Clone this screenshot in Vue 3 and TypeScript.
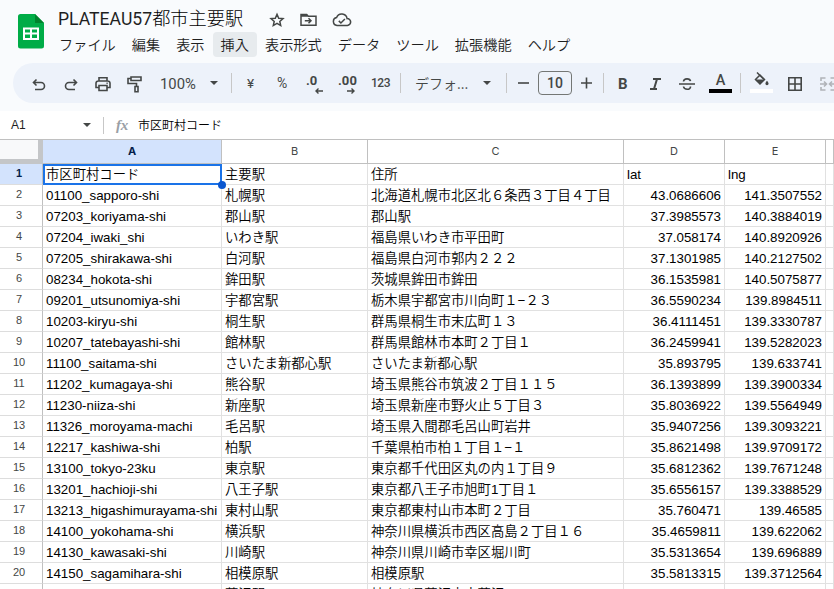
<script setup lang="ts">
interface Row {
  code: string
  station: string
  address: string
  lat: string
  lng: string
}

const menus = [
  { label: 'ファイル' },
  { label: '編集' },
  { label: '表示' },
  { label: '挿入', active: true },
  { label: '表示形式' },
  { label: 'データ' },
  { label: 'ツール' },
  { label: '拡張機能' },
  { label: 'ヘルプ' },
]

const columns = ['A', 'B', 'C', 'D', 'E', '']

const source: string[][] = [
  ['市区町村コード', '主要駅', '住所', 'lat', 'lng'],
  ['01100_sapporo-shi', '札幌駅', '北海道札幌市北区北６条西３丁目４丁目', '43.0686606', '141.3507552'],
  ['07203_koriyama-shi', '郡山駅', '郡山駅', '37.3985573', '140.3884019'],
  ['07204_iwaki_shi', 'いわき駅', '福島県いわき市平田町', '37.058174', '140.8920926'],
  ['07205_shirakawa-shi', '白河駅', '福島県白河市郭内２２２', '37.1301985', '140.2127502'],
  ['08234_hokota-shi', '鉾田駅', '茨城県鉾田市鉾田', '36.1535981', '140.5075877'],
  ['09201_utsunomiya-shi', '宇都宮駅', '栃木県宇都宮市川向町１−２３', '36.5590234', '139.8984511'],
  ['10203-kiryu-shi', '桐生駅', '群馬県桐生市末広町１３', '36.4111451', '139.3330787'],
  ['10207_tatebayashi-shi', '館林駅', '群馬県館林市本町２丁目１', '36.2459941', '139.5282023'],
  ['11100_saitama-shi', 'さいたま新都心駅', 'さいたま新都心駅', '35.893795', '139.633741'],
  ['11202_kumagaya-shi', '熊谷駅', '埼玉県熊谷市筑波２丁目１１５', '36.1393899', '139.3900334'],
  ['11230-niiza-shi', '新座駅', '埼玉県新座市野火止５丁目３', '35.8036922', '139.5564949'],
  ['11326_moroyama-machi', '毛呂駅', '埼玉県入間郡毛呂山町岩井', '35.9407256', '139.3093221'],
  ['12217_kashiwa-shi', '柏駅', '千葉県柏市柏１丁目１−１', '35.8621498', '139.9709172'],
  ['13100_tokyo-23ku', '東京駅', '東京都千代田区丸の内１丁目９', '35.6812362', '139.7671248'],
  ['13201_hachioji-shi', '八王子駅', '東京都八王子市旭町1丁目１', '35.6556157', '139.3388529'],
  ['13213_higashimurayama-shi', '東村山駅', '東京都東村山市本町２丁目', '35.760471', '139.46585'],
  ['14100_yokohama-shi', '横浜駅', '神奈川県横浜市西区高島２丁目１６', '35.4659811', '139.622062'],
  ['14130_kawasaki-shi', '川崎駅', '神奈川県川崎市幸区堀川町', '35.5313654', '139.696889'],
  ['14150_sagamihara-shi', '相模原駅', '相模原駅', '35.5813315', '139.3712564'],
  ['', '藤沢駅', '神奈川県藤沢市南藤沢', '', ''],
]
const rows: Row[] = source.map(([code, station, address, lat, lng]) => ({ code, station, address, lat, lng }))
</script>

<template>
  <div class="app">
    <header class="top">
      <svg class="logo" width="26" height="35" viewBox="0 0 26 35">
        <path d="M2.500 0H17l9 9v23a2.500 2.500 0 0 1-2.500 2.500h-21A2.500 2.500 0 0 1 0 32V2.500A2.500 2.500 0 0 1 2.500 0z" fill="#00ac47" />
        <path d="M17 0l9 9h-9z" fill="#00832d" />
        <path d="M5 13.500h16v12.500H5zM7 15.500v3h5v-3zm7 0v3h5v-3zm-7 5v3.500h5v-3.500zm7 0v3.500h5v-3.500z" fill="#fff" fill-rule="evenodd" />
      </svg>
      <div class="heading">
        <div class="title-line">
          <span class="title">PLATEAU57<span class="ja">都市主要駅</span></span>
          <svg class="t-icon" width="16" height="16" viewBox="0 0 16 16"><path d="M8 2.300l1.700 3.900 4.300.4-3.200 2.800.9 4.200L8 11.400l-3.700 2.200.9-4.200L2 6.600l4.300-.4z" /></svg>
          <svg class="t-icon" width="17" height="14" viewBox="0 0 17 14"><path d="M1 2.500V12.200h15V3.200H8.300L6.700 1.500H1zM1 3h7M4.800 7.700h6M8.500 5.200L11 7.700 8.500 10.200" /></svg>
          <svg class="t-icon" width="20" height="14" viewBox="0 0 20 14"><path d="M5 12.400a4 4 0 0 1-.4-7.900 5.500 5.500 0 0 1 10.500 1.100 3.400 3.400 0 0 1 .3 6.800zM6.800 7.900l2.100 2.100 4-4" /></svg>
        </div>
        <nav class="menus">
          <span v-for="m in menus" :key="m.label" class="menu" :class="{ active: m.active }">{{ m.label }}</span>
        </nav>
      </div>
    </header>

    <div class="toolbar">
      <svg class="undo" width="14" height="14" viewBox="0 0 14 14"><path d="M4.500 1.500L1.500 4.500l3 3M1.800 4.500H9a3.500 3.500 0 0 1 0 7H3" /></svg>
      <svg class="redo" width="14" height="14" viewBox="0 0 14 14"><path d="M9.500 1.500l3 3-3 3M12.200 4.500H5a3.500 3.500 0 0 0 0 7h6" /></svg>
      <svg class="print" width="16" height="16" viewBox="0 0 16 16"><path d="M4 4.500V1.800h8v2.700M4 11.500H1V7.200A2.200 2.200 0 0 1 3.200 5h9.600A2.200 2.200 0 0 1 15 7.200v4.300h-3M4 9.500h8v5H4zM11.500 7.300h1.200" /></svg>
      <svg class="paint" width="15" height="17" viewBox="0 0 15 17"><path d="M4 1h10v3.500H4zM4 2.500H1V7.500h8.500v3M8 10.500h3v5.300H8z" /></svg>
      <span class="zoom">100%</span>
      <i class="caret zoom-caret" />
      <i class="sep s1" />
      <span class="yen">¥</span>
      <span class="percent">%</span>
      <span class="decimal">.0<svg width="8" height="6" viewBox="0 0 8 6"><path d="M8 3H1M3.500.5L1 3l2.500 2.500" /></svg></span>
      <span class="decimal more">.00<svg width="8" height="6" viewBox="0 0 8 6"><path d="M0 3h7M4.500.5L7 3 4.500 5.500" /></svg></span>
      <span class="num">123</span>
      <i class="sep s2" />
      <span class="font">デフォ...</span>
      <i class="caret font-caret" />
      <i class="sep s3" />
      <svg class="minus" width="11" height="12" viewBox="0 0 11 12"><path d="M0 6h11" /></svg>
      <span class="size">10</span>
      <svg class="plus" width="11" height="12" viewBox="0 0 11 12"><path d="M0 6h11M5.500.500v11" /></svg>
      <i class="sep s4" />
      <span class="bold">B</span>
      <svg class="italic" width="11" height="12" viewBox="0 0 11 12"><path d="M3 1h8M0 11h7M7 1L4 11" /></svg>
      <svg class="strike" width="16" height="14" viewBox="0 0 16 14"><path d="M0 7h16M4.500 4.500C4.800 1 11 1 11.500 4.200M4.500 9.500c.5 3.700 7.300 3.700 7 0" /></svg>
      <span class="color">A<i /></span>
      <i class="sep s5" />
      <span class="fill">
        <svg width="15" height="15" viewBox="0 0 15 15"><path class="line" d="M3 .5l7 7M6 3L1.500 7.500 6 12l4.500-4.500z" /><path class="solid" d="M1.500 7.500h9L6 12.200zM13 8.700s1.600 1.800 1.600 2.900a1.600 1.600 0 0 1-3.200 0C11.400 10.500 13 8.700 13 8.700z" /></svg>
        <i />
      </span>
      <svg class="borders" width="14" height="14" viewBox="0 0 14 14"><path d="M.8.800h12.400v12.400H.8zM7 1v12M1 7h12" /></svg>
      <svg class="merge" width="16" height="14" viewBox="0 0 16 14"><path d="M5.500 1H1v3M1 10v3h4.500M10.500 1H15v3M15 10v3h-4.500M0 7h6M4 4.500L6.500 7 4 9.500M16 7h-6M12 4.500L9.500 7l2.500 2.500" /></svg>
    </div>

    <div class="formula">
      <span class="name">A1</span>
      <i class="caret" />
      <i class="fsep" />
      <span class="fx"><em>f</em>x</span>
      <span class="value">市区町村コード</span>
    </div>

    <div class="sheet">
      <div class="corner" />
      <div v-for="(c, i) in columns" :key="'h' + i" class="col-head" :class="{ selected: i === 0 }">{{ c }}</div>
      <template v-for="(r, i) in rows" :key="i">
        <div class="row-head" :class="{ selected: i === 0 }">{{ r.code ? i + 1 : '' }}</div>
        <div class="cell" :class="{ current: i === 0 }">{{ r.code }}<i v-if="i === 0" class="handle" /></div>
        <div class="cell">{{ r.station }}</div>
        <div class="cell">{{ r.address }}</div>
        <div class="cell" :class="{ number: i > 0 }">{{ r.lat }}</div>
        <div class="cell" :class="{ number: i > 0 }">{{ r.lng }}</div>
        <div class="cell" />
      </template>
    </div>
  </div>
</template>

<style>
body { margin: 0; overflow: hidden; }
</style>

<style scoped>
* { box-sizing: border-box; }
.app { width: 834px; height: 589px; overflow: hidden; background: #f9fbfd; color: #1f1f1f; font-family: "Liberation Sans", "Noto Sans CJK JP", sans-serif; white-space: nowrap; }
svg { display: block; flex: none; fill: none; stroke: #444746; stroke-width: 1.6; }
i { display: block; flex: none; }
.top { display: flex; height: 63px; padding-left: 18px; }
.logo { margin-top: 14px; stroke: none; }
.heading { margin-left: 7px; }
.title-line { display: flex; align-items: center; height: 32px; padding: 8px 0 0 7px; }
.title { width: 184px; margin: -5px 27px 0 0; font: 400 17.600px/26px Roboto, "Noto Sans CJK JP", sans-serif; }
.ja { font: 300 18.200px/26px "Noto Sans CJK JP", sans-serif; color: #000; }
.t-icon { margin-right: 15px; stroke-width: 1.5; }
.menus { display: flex; }
.menu { height: 25px; padding: 0 8px; font: 350 14.2px/25px "Noto Sans CJK JP", sans-serif; border-radius: 4px; }
.active { background: #e7ebee; }
.toolbar { display: flex; align-items: center; width: 834px; height: 40px; margin-left: 13px; padding-left: 19px; background: #edf2fa; border-radius: 20px 0 0 20px; color: #444746; }
.caret { border: 4px solid transparent; border-top-color: #444746; border-bottom: 0; }
.sep { width: 1px; height: 20px; background: #c7c7c7; }
.undo { margin-top: 4px; }
.redo { margin: 4px 0 0 18px; }
.print { margin: 1px 0 0 17px; }
.paint { margin: 2px 0 0 16px; }
.zoom { width: 39px; margin-left: 18px; padding-top: 1px; font: 14.800px Roboto; }
.zoom-caret { margin-left: 11px; }
.s1 { margin-left: 13px; }
.yen { width: 9px; margin-left: 15px; font: 13.500px Roboto; }
.percent { width: 12px; margin-left: 21px; font: 14px Roboto; }
.decimal { position: relative; width: 18px; height: 22px; margin-left: 17px; font: 700 13px/18px Roboto; letter-spacing: .1px; }
.decimal svg { position: absolute; left: 9px; top: 16px; stroke-width: 1.4; }
.more { margin-left: 14px; }
.num { width: 19px; margin-left: 15px; font: 500 12px Roboto; letter-spacing: -.5px; }
.s2 { margin-left: 10px; }
.font { width: 54px; margin-left: 14px; font: 350 14px/20px "Noto Sans CJK JP"; }
.font-caret { margin-left: 14px; }
.s3 { margin-left: 15px; }
.minus { margin-left: 11px; }
.size { width: 34px; height: 24px; margin-left: 9px; border: 1px solid #747775; border-radius: 4px; text-align: center; font: 500 14px/23px Roboto; }
.plus { margin-left: 9px; }
.s4 { margin-left: 11px; }
.bold { width: 10px; margin-left: 14px; padding-top: 2px; font: 700 15px Roboto; }
.italic { margin: 2px 0 0 22px; stroke-width: 2; }
.strike { margin: 2px 0 0 18px; }
.color { width: 23px; height: 20px; margin-left: 14px; text-align: center; font: 500 14.500px/16px Roboto; }
.color i { height: 4px; background: #000; }
.s5 { margin-left: 8px; }
.fill { width: 23px; height: 20px; margin-left: 9px; }
.fill svg { margin: -1px 0 0 4px; stroke-width: 1.5; }
.fill i { height: 4px; margin-top: 2px; background: #fff; }
.fill .solid { fill: #444746; stroke: none; }
.borders { margin: 2px 0 0 15px; }
.merge { margin: 2px 0 0 18px; stroke: #b0b3b8; }
.formula { display: flex; align-items: center; height: 28px; margin-top: 8px; padding-left: 11px; background: #fff; font-size: 12px; }
.name { width: 72px; }
.fsep { width: 1px; height: 17px; margin-left: 12px; background: #c7c7c7; }
.fx { width: 15px; margin-left: 12px; font: italic 700 15px/18px "Liberation Serif"; letter-spacing: -.3px; color: #9aa0a6; }
.value { margin-left: 7px; font: 350 12px/18px "Noto Sans CJK JP"; color: #000; }
.sheet { display: grid; grid-template-columns: 43px 179px 146px 256px 101px 101px 8px; grid-template-rows: 24px; grid-auto-rows: 21px; border-top: 1px solid #c0c0c0; background: #fff; }
.corner { border: solid #c4c6c8; border-width: 0 5px 5px 0; background: #f8f9fa; }
.col-head, .row-head { display: flex; align-items: center; justify-content: center; padding-bottom: 1px; border: solid #c0c0c0; border-width: 0 1px 1px 0; font: 11px Inter; color: #444746; }
.row-head { padding: 0 4px 2px 0; border-bottom-color: #ddd; font: 11px "Liberation Sans"; }
.selected { background: #d3e3fd; color: #041e49; font-weight: 700; }
.cell { position: relative; padding: 1px 0 0 3px; border: solid #e1e1e1; border-width: 0 1px 1px 0; font: 350 13.333px/20px "Liberation Sans", "Noto Sans CJK JP", sans-serif; color: #000; }
.number { padding-right: 3px; text-align: right; }
.current { outline: 2px solid #1a73e8; outline-offset: -2px; z-index: 1; }
.handle { position: absolute; right: -5px; bottom: -5px; width: 8px; height: 8px; border-radius: 50%; background: #0b57d0; }
</style>
